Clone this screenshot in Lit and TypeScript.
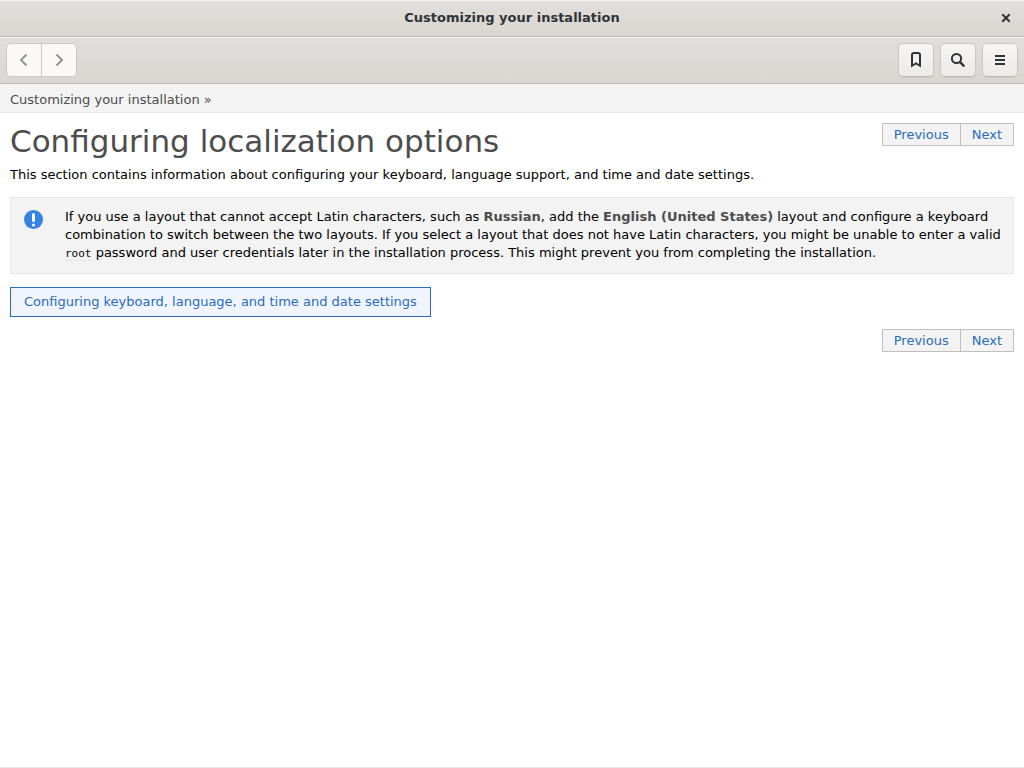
import { LitElement, html, css } from "lit";
import { customElement } from "lit/decorators.js";

@customElement("page-links")
class PageLinks extends LitElement {
  static styles = css`
    :host {
      display: block;
      flex: none;
    }
    .links {
      display: flex;
      border: 1px solid #c0bfbc;
      border-radius: 1px;
      background: #f3f3f3;
    }
    .link {
      padding: 0 11px;
      line-height: 21px;
      color: #2a6bba;
      text-decoration: none;
    }
    .link + .link {
      border-left: 1px solid #c0bfbc;
    }
  `;

  render() {
    return html`
      <nav class="links" aria-label="Pages">
        <a class="link" href="#previous">Previous</a>
        <a class="link" href="#next">Next</a>
      </nav>
    `;
  }
}

@customElement("app-root")
class AppRoot extends LitElement {
  static styles = css`
    :host {
      display: flex;
      flex-direction: column;
      box-sizing: border-box;
      min-height: 100vh;
      background: #fff;
      border-bottom: 1px solid #e6e6e4;
      color: #000;
      font: 13px/18px "DejaVu Sans", sans-serif;
    }
    button {
      display: flex;
      align-items: center;
      justify-content: center;
      box-sizing: border-box;
      margin: 0;
      padding: 0;
      color: #2e3436;
    }
    .titlebar {
      display: grid;
      grid-template-columns: 1fr auto 1fr;
      align-items: center;
      box-sizing: border-box;
      height: 37px;
      padding: 0 10px 1px;
      border-top: 1px solid #f5f4f2;
      border-bottom: 1px solid #bfb8b1;
      background: linear-gradient(#e1dedb, #dad6d2);
    }
    .title {
      grid-column: 2;
      margin: 0;
      font-size: 13px;
      font-weight: bold;
      color: #2e3436;
    }
    .close {
      justify-self: end;
      width: 16px;
      height: 16px;
      border: 0;
      background: none;
    }
    .toolbar {
      display: flex;
      align-items: center;
      justify-content: space-between;
      box-sizing: border-box;
      height: 47px;
      padding: 0 6px 2px;
      border-top: 1px solid #f9f8f8;
      border-bottom: 1px solid #bfb8b1;
      background: linear-gradient(#e1dedb, #dad6d2);
    }
    .history,
    .tools {
      display: flex;
    }
    .tools {
      gap: 6px;
    }
    .tool {
      width: 36px;
      height: 34px;
      border: 1px solid #cdc7c2;
      border-bottom-color: #bfb8b1;
      border-radius: 5px;
      background: linear-gradient(#f6f5f4, #edebe9);
      box-shadow: 0 1px 1px rgba(0, 0, 0, 0.07);
    }
    .step {
      width: 36px;
      height: 34px;
      border: 1px solid #cdc7c2;
      border-radius: 5px 0 0 5px;
      background: #faf9f8;
      color: #929595;
    }
    .step + .step {
      width: 35px;
      border-left: 0;
      border-radius: 0 5px 5px 0;
    }
    .trail {
      padding: 7px 10px 3px;
      border-bottom: 1px solid #e6e6e4;
      background: #f3f3f3;
    }
    .crumb {
      color: #4d4d4d;
      text-decoration: none;
    }
    .page {
      padding: 10px;
    }
    .head {
      display: flex;
      align-items: flex-start;
      justify-content: space-between;
    }
    .heading {
      margin: 0;
      font-size: 31px;
      line-height: 36px;
      font-weight: normal;
      color: #4d4d4d;
    }
    .intro {
      margin: 7px 0 13px;
    }
    .note {
      display: flex;
      gap: 22px;
      padding: 10px 4px 11px 13px;
      border: 1px solid #e6e6e4;
      background: #f3f3f3;
    }
    .badge {
      flex: none;
      margin-top: 2px;
    }
    .note-text {
      margin: 0;
    }
    .gui {
      color: #4d4d4d;
    }
    .code {
      border-bottom: 1px solid #e6e6e4;
      font: 11px "DejaVu Sans Mono", monospace;
    }
    .topic {
      display: inline-block;
      margin: 13px 0 12px;
      padding: 5px 13px;
      border: 1px solid #2a6bba;
      background: #f0f5fd;
      color: #2a6bba;
      text-decoration: none;
    }
    .foot {
      display: flex;
      justify-content: flex-end;
    }
  `;

  render() {
    return html`
      <header class="titlebar">
        <h2 class="title">Customizing your installation</h2>
        <button class="close" aria-label="Close">
          <svg width="16" height="16" viewBox="0 0 16 16" fill="none" stroke="currentColor" stroke-width="2">
            <path d="M4.3 4.3l7.4 7.4M11.7 4.3l-7.4 7.4" />
          </svg>
        </button>
      </header>
      <div class="toolbar" role="toolbar" aria-label="Help">
        <div class="history">
          <button class="step" aria-label="Back">
            <svg width="16" height="16" viewBox="0 0 16 16" fill="none" stroke="currentColor" stroke-width="2">
              <path d="M10.5 2.5L5 8l5.5 5.5" />
            </svg>
          </button>
          <button class="step" aria-label="Forward">
            <svg width="16" height="16" viewBox="0 0 16 16" fill="none" stroke="currentColor" stroke-width="2">
              <path d="M5.5 2.5L11 8l-5.5 5.5" />
            </svg>
          </button>
        </div>
        <div class="tools">
          <button class="tool" aria-label="Bookmarks">
            <svg width="16" height="16" viewBox="0 0 16 16" fill="currentColor">
              <path
                fill-rule="evenodd"
                d="M3 15.500V3Q3 0 6 0h4q3 0 3 3v12.500L8 12.500zM5 12.200l3-1.900 3 1.900V3q0-1-1-1H6Q5 2 5 3z"
              />
            </svg>
          </button>
          <button class="tool" aria-label="Search">
            <svg width="16" height="16" viewBox="0 0 16 16" fill="none" stroke="currentColor" stroke-width="2">
              <circle cx="6.5" cy="6.5" r="4.6" />
              <path d="M9.8 9.8l4.500 4.500" stroke-width="2.4" />
            </svg>
          </button>
          <button class="tool" aria-label="Menu">
            <svg width="16" height="16" viewBox="0 0 16 16" fill="currentColor">
              <path d="M3 3h10v2H3zM3 7h10v2H3zM3 11h10v2H3z" />
            </svg>
          </button>
        </div>
      </div>
      <nav class="trail" aria-label="Breadcrumb">
        <a class="crumb" href="#top">Customizing your installation&nbsp;»</a>
      </nav>
      <main class="page">
        <div class="head">
          <h1 class="heading">Configuring localization options</h1>
          <page-links></page-links>
        </div>
        <p class="intro">
          This section contains information about configuring your keyboard, language support, and time and date
          settings.
        </p>
        <aside class="note">
          <svg class="badge" width="19" height="19" viewBox="0 0 19 19">
            <circle cx="9.5" cy="9.5" r="9.5" fill="#3584e4" />
            <rect x="8" y="3" width="3" height="9" rx="1.5" fill="#fff" />
            <circle cx="9.5" cy="15" r="1.5" fill="#fff" />
          </svg>
          <p class="note-text">
            If you use a layout that cannot accept Latin characters, such as <b class="gui">Russian</b>, add the
            <b class="gui">English (United States)</b> layout and configure a keyboard combination to switch between
            the two layouts. If you select a layout that does not have Latin characters, you might be unable to enter
            a valid <code class="code">root</code> password and user credentials later in the installation process.
            This might prevent you from completing the installation.
          </p>
        </aside>
        <a class="topic" href="#settings">Configuring keyboard, language, and time and date settings</a>
        <footer class="foot"><page-links></page-links></footer>
      </main>
    `;
  }
}
